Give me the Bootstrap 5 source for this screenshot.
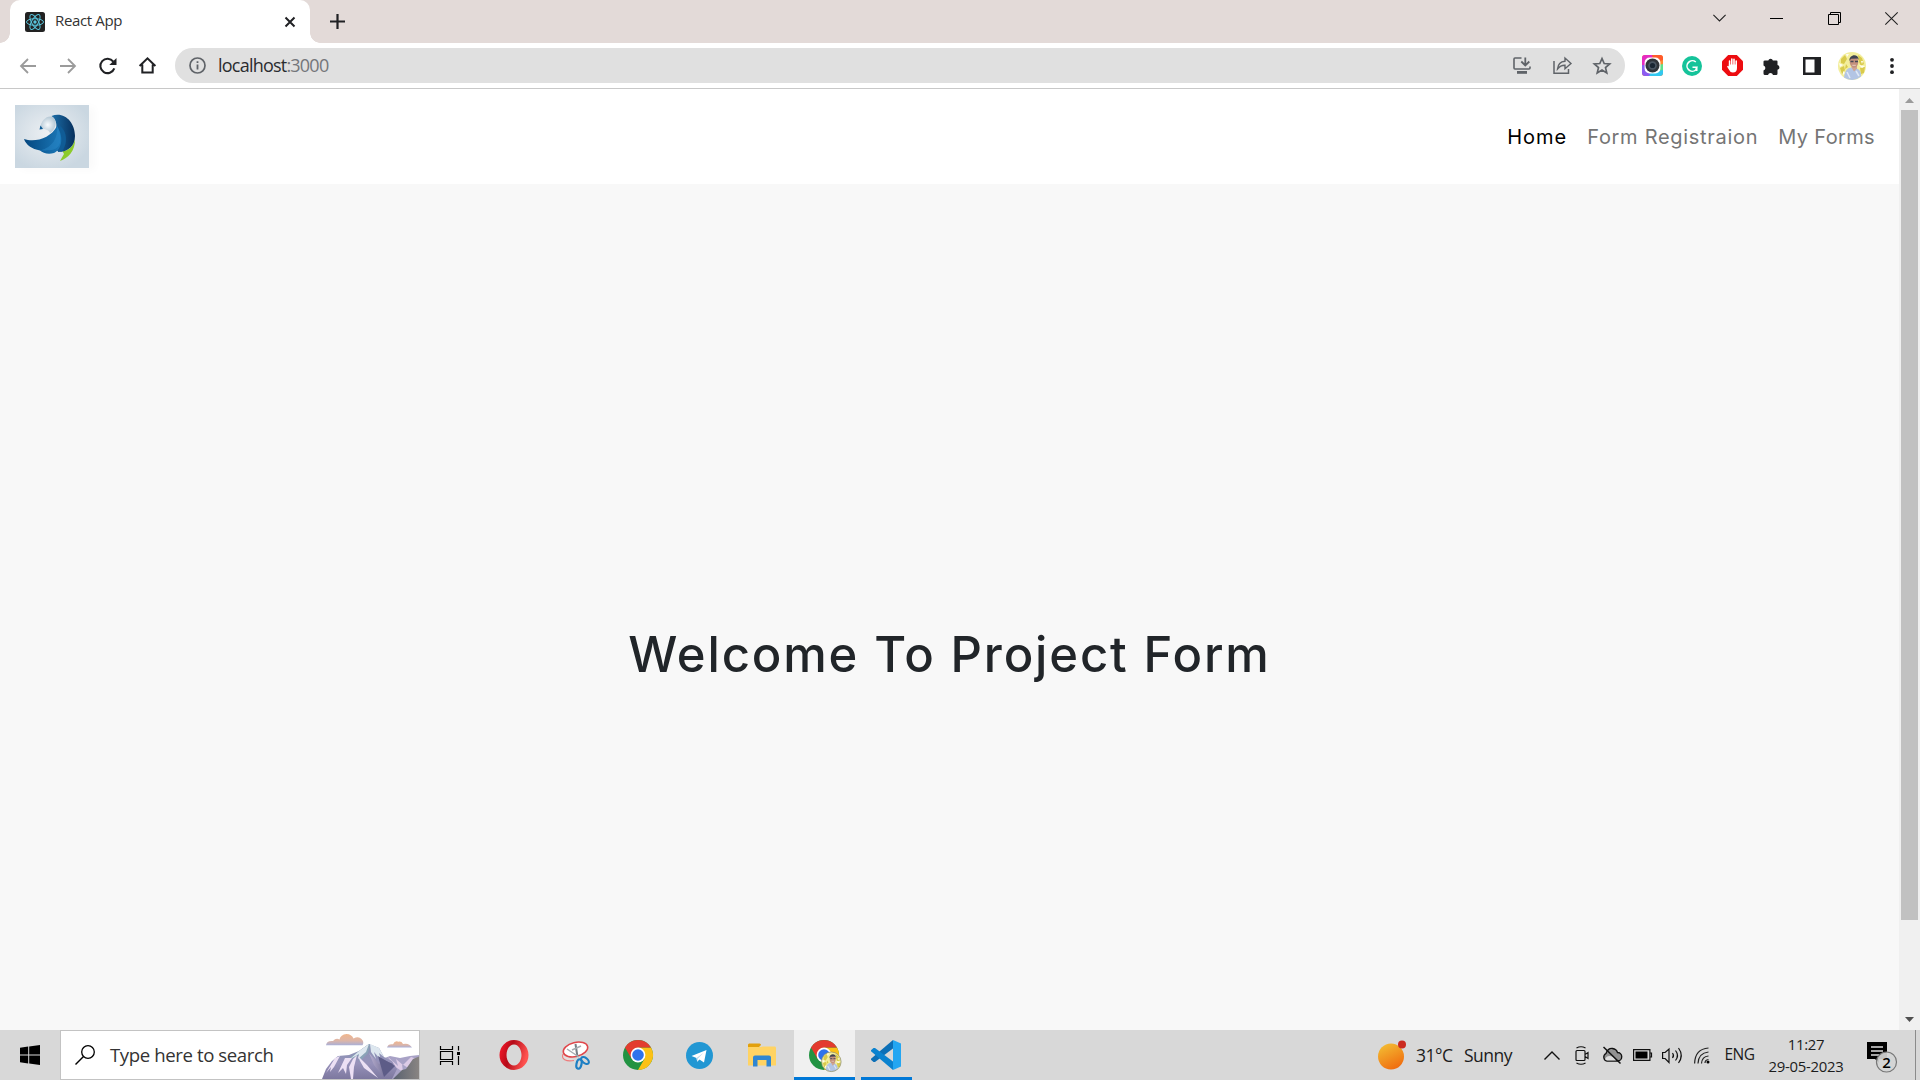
<!DOCTYPE html>
<html lang="en">
<head>
<meta charset="utf-8">
<title>React App</title>
<link href="https://cdn.jsdelivr.net/npm/bootstrap@5.3.0/dist/css/bootstrap.min.css" rel="stylesheet">
<style>
body{width:1920px;height:1080px;overflow:hidden;font-family:"Open Sans","Noto Sans",sans-serif;background:#fff}
svg{display:block;flex:none;overflow:visible}
.tabstrip{height:43px;background:#e3dad8;padding-left:10px}
.browser-tab{position:relative;width:300px;height:43px;background:#fff;border-radius:10px 10px 0 0;padding:0 15px;line-height:39px}
.browser-tab::before,.browser-tab::after{content:"";position:absolute;bottom:0;width:10px;height:10px}
.browser-tab::before{left:-10px;background:radial-gradient(circle at 0 0,transparent 9.5px,#fff 10px)}
.browser-tab::after{right:-10px;background:radial-gradient(circle at 100% 0,transparent 9.5px,#fff 10px)}
.tab-title{font-size:15px;letter-spacing:-.35px;color:#333;margin:-2px 0 0 10px}
.new-tab{margin-left:20px}
.win-btn{width:57.3px;height:36px}
.toolbar{height:46px;border-bottom:1px solid #c8c8c8;padding-left:7.5px}
.cell40{width:40px;height:40px}
.omnibox{width:1450px;height:35px;border-radius:18px;background:#e0e0e0;margin:0 7px 0 7.5px;padding-left:14px;padding-right:3px}
.url{font-size:18px;letter-spacing:-.78px;color:#2b2c2f;margin:-2px 0 0 12px;line-height:34px}
.url span{color:#74767a}
.viewport{height:941px;background:#f8f8f8}
.site-nav{height:95px;padding:0 15px;font-family:Inter,"Open Sans",sans-serif;font-size:20px}
.site-nav .navbar-nav{gap:20px;margin-right:9px}
.site-nav .nav-link{padding:0;color:#757575;white-space:nowrap;letter-spacing:.7px}
.site-nav .nav-link.active{color:#000;letter-spacing:1px}
.site-nav .nav-link:last-child{letter-spacing:.35px}
.brand-art{width:74px;height:63px;box-shadow:6px 2px 8px rgba(0,0,0,.025)}
.hero{height:846px}
.hero-title{font-family:Inter,"Open Sans",sans-serif;font-weight:500;font-size:49px;letter-spacing:1.85px;line-height:60px;color:#212529;padding-top:96px;white-space:nowrap}
.scroller{width:21px;background:#f0f0f0}
.thumb{width:17px;height:810px;background:#c1c1c1;margin-top:7px}
.arrow-up{margin-top:9px}
.taskbar{height:50px;background:#d8d8d8}
.start-cell{width:60px}
.search-box{width:360px;height:50px;background:#fff;border:1px solid #c3c3c3;padding-left:14px;overflow:hidden}
.search-text{font-size:18.6px;letter-spacing:-.4px;color:#333;margin-left:15px}
.mountains{margin-right:-1px}
.app-strip{margin-left:2.500px}
.cell62{width:62px;height:50px}
.app-live{width:61px;height:50px;background:#f0f0f0;border-bottom:3px solid #0078d7;margin-left:1px;padding-top:3px}
.app-open{width:51px;height:50px;border-bottom:3px solid #0078d7;margin-left:6px;padding-top:3px}
.cell30{width:30px}
.tray{width:542px;font-size:17.5px;color:#1c1c1c}
.weather{letter-spacing:-.5px}
.degrees{width:48px;margin-left:9px}
.sky{width:73px}
.lang{width:45px;font-size:15.5px;letter-spacing:-.5px}
.clock{width:88px;font-size:14.9px;line-height:22px;letter-spacing:-.28px}
.alerts{margin-left:17px}
.show-desktop{width:5px;height:50px;border-left:1px solid #8b8b8b}
</style>
<script src="https://cdn.jsdelivr.net/npm/bootstrap@5.3.0/dist/js/bootstrap.bundle.min.js"></script>
</head>
<body class="d-flex flex-column">
<svg width="0" height="0" class="position-absolute">
 <defs>
  <g id="chrome-mark">
   <circle cx="15" cy="15" r="15" fill="#229342"/>
   <path d="M15 7.500H28A15 15 0 0 1 15 30L21.500 18.800z" fill="#fbc116"/>
   <path d="M2 7.500A15 15 0 0 1 28 7.500H15L8.500 18.800z" fill="#e33b2e"/>
   <circle cx="15" cy="15" r="7.400" fill="#fff"/><circle cx="15" cy="15" r="5.800" fill="#2f73ec"/>
  </g>
  <g id="portrait">
   <circle cx="14" cy="14" r="14" fill="#f3ee9c"/>
   <path d="M3 7l4-4 2 4-3 5-3-1zM20 3l4 3 2 6-3 2-2-4zM2 16l4-2 1 4-3 4zM22 16l5-1-1 6-3 1zM8 12l2 3-3 2z" fill="#d9ca4c"/>
   <path d="M1 11l4 2-3 2zM21 13l6 1-3 2zM8 2l3 0-2 3zM23 9l2 0-1 3zM5 19l2 2-2 2z" fill="#fffdf0"/>
   <path d="M6 25.500C7 18 10 15 15 15.500c6 .5 8.500 4 8 9A14 14 0 0 1 6 25.500z" fill="#b3c5e4"/>
   <path d="M9 20l3 6M18 19l3 5" stroke="#dfe8f5" stroke-width="1.500"/>
   <path d="M13.500 15.500l2.500 4 3-3v-3h-5z" fill="#cfa592"/>
   <ellipse cx="16" cy="10" rx="4.300" ry="5.700" fill="#c4917d"/>
   <path d="M11.500 9C10.500 3 20 .5 20.800 8L19.500 6.500 13 6.800z" fill="#3f4250"/>
   <path d="M12.500 9.500h3M17 9.500h3" stroke="#474a55" stroke-width="1.300"/>
   <path d="M14.300 13.300h3.500" stroke="#f0dcd2" stroke-width=".8"/>
  </g>
  <linearGradient id="mt" x1="0" y1="0" x2="0" y2="1"><stop offset="0" stop-color="#8793b3"/><stop offset=".55" stop-color="#9792ba"/><stop offset="1" stop-color="#7d789f"/></linearGradient>
  <linearGradient id="ridge" x1="0" y1="0" x2="1" y2="0"><stop offset="0" stop-color="#b9b0d0"/><stop offset="1" stop-color="#56547e"/></linearGradient>
  <linearGradient id="cl" x1="0" y1="0" x2="0" y2="1"><stop offset="0" stop-color="#f0b68d"/><stop offset=".6" stop-color="#dcb5a8"/><stop offset="1" stop-color="#a9b0d8"/></linearGradient>
  <linearGradient id="rk" x1="0" x2="1"><stop offset="0" stop-color="#59616f"/><stop offset="1" stop-color="#8b8683"/></linearGradient>
  <linearGradient id="sun" x1=".2" y1="0" x2=".7" y2="1"><stop offset="0" stop-color="#f3bd33"/><stop offset="1" stop-color="#f06a0e"/></linearGradient>
  <linearGradient id="op" x1="0" x2="1" y1="0" y2=".3"><stop offset="0" stop-color="#ff1b2d"/><stop offset=".45" stop-color="#b50a18"/><stop offset="1" stop-color="#ff5350"/></linearGradient>
  <radialGradient id="lbg" cx=".45" cy=".45" r=".6"><stop offset="0" stop-color="#edf0f3"/><stop offset="1" stop-color="#cad7e1"/></radialGradient>
  <linearGradient id="lw" x1="0" x2="1"><stop offset="0" stop-color="#04477f"/><stop offset="1" stop-color="#1b78b8"/></linearGradient>
  <linearGradient id="ld" x1="0" x2="1"><stop offset="0" stop-color="#1c6ea8"/><stop offset="1" stop-color="#062f5c"/></linearGradient>
  <radialGradient id="lh"><stop offset="0" stop-color="#f8fbfd"/><stop offset="1" stop-color="#b5c8d5"/></radialGradient>
 </defs>
</svg>

<header>
 <div class="tabstrip d-flex">
  <div class="browser-tab d-flex align-items-center">
   <svg width="20" height="20" viewBox="0 0 20 20"><rect width="20" height="20" rx="2.500" fill="#222"/><g fill="none" stroke="#58c4dc" stroke-width="1"><ellipse cx="10" cy="10" rx="8.500" ry="3.300"/><ellipse cx="10" cy="10" rx="8.500" ry="3.300" transform="rotate(60 10 10)"/><ellipse cx="10" cy="10" rx="8.500" ry="3.300" transform="rotate(120 10 10)"/></g><circle cx="10" cy="10" r="1.700" fill="#58c4dc"/></svg>
   <span class="tab-title">React App</span>
   <svg class="ms-auto" width="10" height="10" viewBox="0 0 10 10"><path d="M.5.5l9 9M9.500.5l-9 9" stroke="#202124" stroke-width="2"/></svg>
  </div>
  <svg class="new-tab align-self-center" width="15" height="15" viewBox="0 0 15 15"><path d="M7.500 0v15M0 7.500h15" stroke="#202124" stroke-width="2.200"/></svg>
  <div class="d-flex ms-auto">
   <div class="win-btn d-flex justify-content-center align-items-center"><svg width="13" height="8" viewBox="0 0 13 8"><path d="M.4.8l6.100 6.100L12.600.8" fill="none" stroke="#222" stroke-width="1.100"/></svg></div>
   <div class="win-btn d-flex justify-content-center align-items-center"><svg width="13" height="1"><path d="M0 .5h13" stroke="#000"/></svg></div>
   <div class="win-btn d-flex justify-content-center align-items-center"><svg width="13" height="13" viewBox="0 0 13 13"><path d="M.5 2.500h10v10H.5zM2.500 2V.5h10v10H11" fill="none" stroke="#000"/></svg></div>
   <div class="win-btn d-flex justify-content-center align-items-center"><svg width="13" height="13" viewBox="0 0 13 13"><path d="M.3.3l12.400 12.400M12.700.3L.3 12.700" stroke="#222" stroke-width="1.100"/></svg></div>
  </div>
 </div>
 <div class="toolbar d-flex align-items-center">
  <div class="cell40 d-flex justify-content-center align-items-center"><svg width="16" height="16" viewBox="0 0 16 16"><path d="M16 8H1.500M8 1L1 8l7 7" fill="none" stroke="#9b9b9b" stroke-width="1.800"/></svg></div>
  <div class="cell40 d-flex justify-content-center align-items-center"><svg width="16" height="16" viewBox="0 0 16 16"><path d="M0 8h14.500M8 1l7 7-7 7" fill="none" stroke="#9b9b9b" stroke-width="1.800"/></svg></div>
  <div class="cell40 d-flex justify-content-center align-items-center"><svg width="18" height="16" viewBox="0 0 18 16"><path d="M14.300 3.600A7.200 7.200 0 1 0 15.300 10.400" fill="none" stroke="#202124" stroke-width="2.100"/><path d="M17.500 0v7h-7.200z" fill="#202124"/></svg></div>
  <div class="cell40 d-flex justify-content-center align-items-center"><svg width="17" height="17" viewBox="0 0 17 17"><path d="M.6 9L8.500 1.300 16.400 9M3.300 7.500v8h10.400v-8" fill="none" stroke="#202124" stroke-width="2"/></svg></div>
  <div class="omnibox d-flex align-items-center">
   <svg width="17" height="17" viewBox="0 0 17 17"><circle cx="8.500" cy="8.500" r="7.500" fill="none" stroke="#5f6368" stroke-width="1.700"/><path d="M8.500 7.500v5M8.500 4.300v1.800" stroke="#5f6368" stroke-width="1.800"/></svg>
   <div class="url">localhost<span>:3000</span></div>
   <div class="ms-auto d-flex">
    <div class="cell40 d-flex justify-content-center align-items-center"><svg width="18" height="17" viewBox="0 0 18 17"><path d="M8.500 1H2Q1 1 1 2v9q0 1 1 1h14q1 0 1-1V9.500" fill="none" stroke="#5f6368" stroke-width="1.600"/><path d="M4 14h10v2.800H4z" fill="#5f6368"/><path d="M12.300.5V8M8.300 4.500l4 4 4-4" fill="none" stroke="#5f6368" stroke-width="1.800"/></svg></div>
    <div class="cell40 d-flex justify-content-center align-items-center"><svg width="19" height="17" viewBox="0 0 19 17"><path d="M1 4v12.200h14.500V12" fill="none" stroke="#5f6368" stroke-width="1.500"/><path d="M4.500 12C5 6.500 8 4.500 12 4.200V1l6 5.500-6 5.300V8.300C8.500 8.200 6.500 9.500 4.500 12z" fill="none" stroke="#5f6368" stroke-width="1.400"/></svg></div>
    <div class="cell40 d-flex justify-content-center align-items-center"><svg width="18" height="17" viewBox="0 0 18 17"><path d="M9 1.500l2.200 5 5.500.5-4.200 3.600 1.300 5.300L9 13.100l-4.800 2.800 1.300-5.300L1.300 7l5.500-.5z" fill="none" stroke="#5f6368" stroke-width="1.700"/></svg></div>
   </div>
  </div>
  <div class="cell40 d-flex justify-content-center align-items-center"><svg width="21" height="21" viewBox="0 0 21 21"><rect width="21" height="21" rx="3" fill="#ff8a2e"/><path d="M3 0h9L7 8 0 12V3q0-3 3-3z" fill="#e62bc2"/><path d="M10 0h8q3 0 3 3v2l-9 3z" fill="#ff5a2b"/><path d="M0 10v8q0 3 3 3h7V10z" fill="#8c5bf0"/><path d="M7 21h11q3 0 3-3v-5l-9-1z" fill="#32c8f0"/><path d="M21 9v6l-5 1v-6z" fill="#5fe08a"/><rect x="2.600" y="2.600" width="15.800" height="15.800" rx="5" fill="#fff"/><circle cx="10.500" cy="10.500" r="7" fill="#30343a"/><circle cx="10.500" cy="10.500" r="4.300" fill="#4a5663"/><circle cx="10.500" cy="10.500" r="2.600" fill="#1a2633"/></svg></div>
  <div class="cell40 d-flex justify-content-center align-items-center"><svg width="20" height="20" viewBox="0 0 20 20"><circle cx="10" cy="10" r="10" fill="#15c39a"/><path d="M13.800 6A5.300 5.300 0 1 0 13.800 14L14.800 11.200H10.500M14.700 10.500v4.500" fill="none" stroke="#fff" stroke-width="1.600"/></svg></div>
  <div class="cell40 d-flex justify-content-center align-items-center"><svg width="21" height="21" viewBox="0 0 21 21"><path d="M6.200 0h8.600L21 6.200v8.600L14.800 21H6.200L0 14.800V6.200z" fill="#ed0c10"/><path d="M7.600 12V6M9.800 11V4M12 11V4.300M14.200 12V6" stroke="#fff" stroke-width="1.600" stroke-linecap="round"/><path d="M6.800 9.500H15V13q0 4.500-4.200 4.500-2.500 0-3.600-2.500L5 11.500l1-.8 1 .8z" fill="#fff"/></svg></div>
  <div class="cell40 d-flex justify-content-center align-items-center"><svg width="18" height="18" viewBox="0 0 18 18"><path d="M2 3.500h3.300a2.400 2.400 0 0 1 4.600 0h3.600q1 0 1 1v3.600a2.400 2.400 0 0 1 0 4.700v3.700q0 1.500-1.300 1.500H10a2.600 2.600 0 0 0-5 0H2q-1.500 0-1.500-1.500v-3a2.600 2.600 0 0 0 0-5V4.500q0-1 1.500-1z" fill="#202124"/></svg></div>
  <div class="cell40 d-flex justify-content-center align-items-center"><svg width="18" height="18" viewBox="0 0 18 18"><path d="M0 0h18v18H0z" fill="#202124"/><path d="M2.500 2.500h9v13h-9z" fill="#fff"/></svg></div>
  <div class="cell40 d-flex justify-content-center align-items-center"><svg width="28" height="28" viewBox="0 0 28 28"><use href="#portrait"/></svg></div>
  <div class="cell40 d-flex justify-content-center align-items-center"><svg width="4" height="16" viewBox="0 0 4 16"><g fill="#202124"><circle cx="2" cy="1.800" r="1.900"/><circle cx="2" cy="8" r="1.900"/><circle cx="2" cy="14.200" r="1.900"/></g></svg></div>
 </div>
</header>

<div class="viewport d-flex">
 <main class="flex-grow-1">
  <nav class="site-nav navbar bg-white flex-nowrap">
   <a class="navbar-brand p-0 m-0" href="#"><svg class="brand-art" viewBox="0 0 74 63"><path fill="url(#lbg)" d="M0 0h74v63H0z"/><path d="M60 34C58 43 52 46 47.500 46L49 49 45 56C53 53 60.500 46 60 34z" fill="#8ccb2a"/><path d="M36.500 11C49 6 60 17 60 31 60 41 53 47 43 47L39 30C43 22 42 15 36.500 11z" fill="url(#ld)"/><path d="M44 20C51 25 54 36 47 46.500L38 45z" fill="#105c96"/><path d="M9 34C20 38 36 33 42 21 49 32 47 44 39 48 33 50 28 48 25 45.500 17 44 11 40 9 34z" fill="url(#lw)"/><path d="M42 21C43 33 38 42 25 45.500 32 45 42 47 45 38 46 32 45 26 42 21z" fill="#2c8bcb" opacity=".45"/><path d="M25 24C26 14 34 9 39 13 43 18 39 26 35 28 34 25 29 23 25 24z" fill="url(#lh)"/><path d="M24.500 24.500l1-4 2.500 3.500z" fill="#0d5b96"/></svg></a>
   <div class="navbar-nav flex-row">
    <a class="nav-link active" href="#">Home</a>
    <a class="nav-link" href="#">Form Registraion</a>
    <a class="nav-link" href="#">My Forms</a>
   </div>
  </nav>
  <div class="hero d-flex flex-column align-items-center justify-content-center">
   <h1 class="hero-title m-0">Welcome To Project Form</h1>
  </div>
 </main>
 <div class="scroller d-flex flex-column align-items-center">
  <svg class="arrow-up" width="9" height="5" viewBox="0 0 9 5"><path d="M0 5L4.500 0 9 5z" fill="#9b9b9b"/></svg>
  <div class="thumb"></div>
  <svg class="mt-auto mb-2" width="9" height="5" viewBox="0 0 9 5"><path d="M0 0h9L4.500 5z" fill="#505050"/></svg>
 </div>
</div>

<footer class="taskbar d-flex align-items-center">
 <div class="start-cell d-flex justify-content-center"><svg width="20" height="20" viewBox="0 0 20 20"><path d="M0 2.800L8.200 1.600V9.500H0zM9.200 1.500L20 0v9.500H9.200zM0 10.500h8.200v7.900L0 17.200zM9.200 10.500H20V20L9.200 18.500z"/></svg></div>
 <div class="search-box d-flex align-items-center">
  <svg width="20" height="20" viewBox="0 0 20 20"><circle cx="13" cy="7" r="6.300" fill="none" stroke="#000" stroke-width="1.300"/><path d="M8.500 11.500L.5 19.500" stroke="#000" stroke-width="1.400"/></svg>
  <span class="search-text">Type here to search</span>
  <svg class="mountains ms-auto" width="98" height="48" viewBox="0 0 98 48">
  <path d="M4 14.300Q4.500 9.500 11 10q3-3.500 6.500-1.500 1-5 7-5.500 5 0 7 4.500 5-2.500 8 .5 3 3 1 6.300z" fill="url(#cl)"/><path d="M65 16.500q1-4 6-3.200 2-4.300 5.500-2.600 3-.7 4.500 2.300 6-1.500 9 3.500z" fill="url(#cl)"/>
  <path d="M60 28L68 25 78 27 88 25 98 24V48H58z" fill="#a8a2c6"/>
  <path d="M66 26l10 9-2-7 7 6 8-8 6 2-9 9-6-4 1 8-9-6z" fill="#dccbe6"/>
  <path d="M0 48L4 38 10 30 16 25 27 24 37 20 47 13 57 17 62 26 70 30 75 38 70 48z" fill="url(#mt)"/>
  <path d="M47 13L36 21 27 27 33 27 39 22 37 31 46 22 48 14z" fill="#8aa3b7"/>
  <path d="M47 13l-3 8-8 7 1-5-9 5 9-8zM48 13l9 4 5 9-5-4 2 7-7-8 2 7-5-7z" fill="#dde7ef"/>
  <path d="M4 42l9-15 5-2-6 11-4 5 1-5zM16 42l7-15 7 0-5 7-1 9-3-6zM29 48l-2-12 4-8 4-4-3 12-1 12zM36 25l9 9 11 13-14-10-4-7z" fill="#ece0f4"/>
  <path d="M47 22l10 11 5-4 9 4-10 12-9-11z" fill="url(#ridge)"/>
  <path d="M56 25l17 10-11 11z" fill="#5d5c87"/>
  <path d="M71 48L80 39 84 38 91 28 98 25V48z" fill="url(#rk)"/></svg>
 </div>
 <div class="start-cell d-flex justify-content-center"><svg width="20" height="19" viewBox="0 0 20 19"><path d="M.5 0v3.500h12V0M.5 5.500h12v8H.5zM.5 19v-3.500h12V19M18.500 0v4.500M18.500 10v9" fill="none" stroke="#000" stroke-width="1.200"/><path d="M17 6h3v3h-3z"/></svg></div>
 <div class="app-strip d-flex align-items-center">
  <div class="cell62 d-flex justify-content-center align-items-center"><svg width="30" height="30" viewBox="0 0 30 30"><path fill-rule="evenodd" d="M15 0a14.500 15 0 1 0 0 30 14.500 15 0 1 0 0-30zM15 4.500c5 0 7.500 6 7.500 10.500s-2.500 10.500-7.500 10.500S7.500 19.500 7.500 15s2.500-10.500 7.500-10.500z" fill="url(#op)"/></svg></div>
  <div class="cell62 d-flex justify-content-center align-items-center"><svg width="28" height="29" viewBox="0 0 28 29"><path d="M1 13C-1 18 4 21 12 19.500" fill="#e4dede" stroke="#ed7b7b" stroke-width="1.100"/><ellipse cx="13.500" cy="8.500" rx="12.500" ry="7" transform="rotate(-14 13.500 8.500)" fill="#fff" stroke="#e0474b" stroke-width="1.500"/><path d="M13.500 3l2 13" stroke="#777f86" stroke-width="2"/><path d="M5 8l12 8M10 9l9-4" stroke="#a7adb2" stroke-width="1.500"/><g fill="none" stroke="#1d7fc4" stroke-width="2.200"><ellipse cx="17" cy="23" rx="2.500" ry="4.800" transform="rotate(12 17 23)"/><ellipse cx="23" cy="19.500" rx="2.600" ry="4.500" transform="rotate(-50 23 19.500)"/></g></svg></div>
  <div class="cell62 d-flex justify-content-center align-items-center"><svg width="30" height="30" viewBox="0 0 30 30"><use href="#chrome-mark"/></svg></div>
  <div class="cell62 d-flex justify-content-center align-items-center"><svg width="27" height="27" viewBox="0 0 27 27"><circle cx="13.500" cy="13.500" r="13.500" fill="#2297d3"/><path d="M5.500 14L20.500 8 18 20.500 13.500 17.500 11.200 19.700 10.500 16z" fill="#fff"/><path d="M10.500 16L17.500 10.800 12 16.600 11.200 19.700z" fill="#b9d9ee"/></svg></div>
  <div class="cell62 d-flex justify-content-center align-items-center"><svg width="28" height="24" viewBox="0 0 28 24"><path d="M0 4h12l3-.5h12Q28 3.500 28 5v17.500H0z" fill="#ffd363"/><path d="M1 .5h10.500q1.500 0 1.500 1.500L11 4H0V1.500z" fill="#e2a00c"/><path d="M5 23.500V14.500q0-2 2-2h14q2 0 2 2v9h-4.500v-6.500h-9v6.500z" fill="#2f86d2"/></svg></div>
  <div class="app-live d-flex justify-content-center align-items-center"><svg width="30" height="30" viewBox="0 0 30 30"><use href="#chrome-mark"/><g transform="translate(12.500 12) scale(.7)"><use href="#portrait"/><circle cx="14" cy="14" r="14" fill="none" stroke="#8b8b6a" stroke-width="1"/></g></svg></div>
  <div class="app-open d-flex justify-content-center align-items-center"><svg width="30" height="30" viewBox="0 0 30 30"><path d="M22 0L30 3.500v23L22 30z" fill="#23a6f2"/><path d="M22 0v8.500L4 22 2.500 22 0 19.800V18.800z" fill="#0c6fb6"/><path d="M22 30v-8.500L4 8H2.500L0 10.200V11.200z" fill="#0a82cf"/></svg></div>
 </div>
 <div class="tray d-flex align-items-center ms-auto">
  <svg width="29" height="30" viewBox="0 0 29 30"><circle cx="13" cy="16.500" r="13" fill="url(#sun)"/><circle cx="24" cy="4.500" r="4" fill="#cb2a20"/></svg>
  <span class="weather degrees">31°C</span><span class="weather sky">Sunny</span>
  <div class="cell30 d-flex justify-content-center"><svg width="16" height="9" viewBox="0 0 16 9"><path d="M.5 8.500L8 1l7.500 7.500" fill="none" stroke="#111" stroke-width="1.400"/></svg></div>
  <div class="cell30 d-flex justify-content-center"><svg width="14" height="19" viewBox="0 0 14 19"><g fill="none" stroke="#111" stroke-width="1.200"><path d="M1.500 2Q6-.5 10.500 2M1.500 17q4.500 2.500 9 0M2 4.500h7q1 0 1 1v8q0 1-1 1H2q-1 0-1-1v-8q0-1 1-1zM10 8.500l3-2v6l-3-2"/></g></svg></div>
  <div class="cell30 d-flex justify-content-center"><svg width="20" height="17" viewBox="0 0 20 17"><path d="M5 14a4 4 0 0 1-1-7.500Q6 1 10.500 1.500q4 .5 5 4a4 4 0 0 1 0 8.500z" fill="#929292" stroke="#111" stroke-width="1.300"/><path d="M4 10.500q5-4 10 3H5Q2 12.500 4 10.500z" fill="#ddd"/><path d="M1.500 0l17 16.500" stroke="#111" stroke-width="1.500"/></svg></div>
  <div class="cell30 d-flex justify-content-center"><svg width="19" height="12" viewBox="0 0 19 12"><path d="M.6.6h16.300v10.800H.6zM17 4h1.500v4H17" fill="none" stroke="#111" stroke-width="1.200"/><path d="M2.500 2.500H14.500v7h-12z"/></svg></div>
  <div class="cell30 d-flex justify-content-center"><svg width="21" height="17" viewBox="0 0 21 17"><g fill="none" stroke="#111" stroke-width="1.200"><path d="M.6 5.500h2.500L7 2v13.500l-3.900-4H.6z"/><path d="M10.500 6q2 2.500 0 5M13.500 3.500q4 5 0 10M16.500 1q5.500 7.500 0 15"/></g></svg></div>
  <div class="cell30 d-flex justify-content-center"><svg width="16" height="17" viewBox="0 0 16 17"><g fill="none" stroke="#222" stroke-width="1.200"><path d="M.6 16.500Q1 2 14.500 1M4 16.500Q4.500 6 14.500 5M7.500 16.500q.5-7 7-7.500M11 16q0-3 3.500-3.500"/></g><circle cx="14" cy="15" r="1.500"/></svg></div>
  <span class="lang text-center">ENG</span>
  <div class="clock text-center"><div>11:27</div><div>29-05-2023</div></div>
  <svg class="alerts" width="30" height="33" viewBox="0 0 30 33"><path d="M0 3h20v17h-8v4l-4-4H0z"/><path d="M4 8h12M4 12h12M4 16h8" stroke="#ddd" stroke-width="1.300"/><circle cx="19.500" cy="23" r="10" fill="#d3d4d4" fill-opacity=".93" stroke="#777" stroke-width="1.200"/><text x="19.500" y="28.500" font-size="15" font-weight="600" text-anchor="middle" font-family="Open Sans">2</text></svg>
  <div class="show-desktop ms-auto"></div>
 </div>
</footer>
</body>
</html>
